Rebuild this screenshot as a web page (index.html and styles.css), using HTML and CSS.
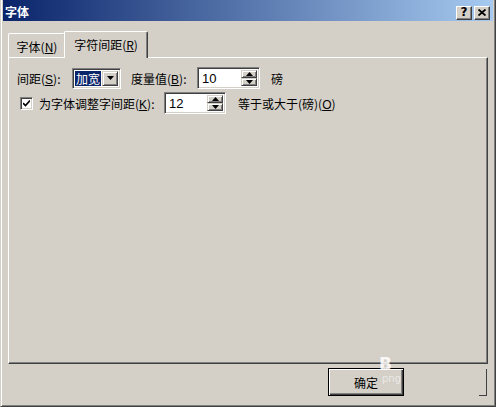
FILE: index.html
```html
<!DOCTYPE html>
<html lang="zh-CN">
<head>
<meta charset="utf-8">
<title>字体</title>
<link rel="stylesheet" href="styles.css">
</head>
<body>
<div class="window">
  <div class="titlebar">
    <span class="title">字体</span>
    <div class="tbtns">
      <span class="tbtn help">?</span>
      <span class="tbtn close"><svg width="8" height="7" viewBox="0 0 8 7"><path d="M0.5 0.5 L7.5 6.5 M7.5 0.5 L0.5 6.5" stroke="#000" stroke-width="1.8" fill="none"/></svg></span>
    </div>
  </div>
  <div class="body">
    <div class="tabs">
      <div class="tab">字体(<u>N</u>)</div>
      <div class="tab active">字符间距(<u>R</u>)</div>
    </div>
    <div class="panel">
      <div class="row r1">
        <span class="lbl l-space">间距(<u>S</u>):</span>
        <div class="combo">
          <span class="cval"><span class="sel">加宽</span></span>
          <span class="cbtn"><svg width="7" height="4" viewBox="0 0 7 4"><path d="M0 0H7L3.5 4Z" fill="#000"/></svg></span>
        </div>
        <span class="lbl l-by">度量值(<u>B</u>):</span>
        <div class="spin s1">
          <span class="sval">10</span>
          <span class="sbtns">
            <span class="sb"><svg width="7" height="4" viewBox="0 0 7 4"><path d="M3.5 0L7 4H0Z" fill="#000"/></svg></span>
            <span class="sb"><svg width="7" height="4" viewBox="0 0 7 4"><path d="M0 0H7L3.5 4Z" fill="#000"/></svg></span>
          </span>
        </div>
        <span class="lbl l-pt">磅</span>
      </div>
      <div class="row r2">
        <span class="chk"><svg width="7" height="7" viewBox="0 0 7 7"><path d="M0 3 L2.5 5.5 L7 0.5" stroke="#000" stroke-width="1.6" fill="none"/></svg></span>
        <span class="lbl l-kern">为字体调整字间距(<u>K</u>):</span>
        <div class="spin s2">
          <span class="sval">12</span>
          <span class="sbtns">
            <span class="sb"><svg width="7" height="4" viewBox="0 0 7 4"><path d="M3.5 0L7 4H0Z" fill="#000"/></svg></span>
            <span class="sb"><svg width="7" height="4" viewBox="0 0 7 4"><path d="M0 0H7L3.5 4Z" fill="#000"/></svg></span>
          </span>
        </div>
        <span class="lbl l-ge">等于或大于(磅)(<u>O</u>)</span>
      </div>
    </div>
    <div class="btnrow">
      <div class="btn ok">确定</div>
      <div class="btn-edge"></div>
    </div>
    <div class="watermark"><span class="wm-b">B</span><span class="wm-p">png</span></div>
  </div>
</div>
</body>
</html>
```
FILE: styles.css
```css
* { box-sizing: border-box; }
html, body { margin: 0; padding: 0; }
body {
  width: 496px;
  height: 407px;
  overflow: hidden;
  background: #d4d0c8;
  font-family: "Liberation Sans", "Noto Sans CJK SC", sans-serif;
  font-size: 12px;
  color: #000;
}
u { text-decoration: underline; text-underline-offset: 1px; }

.window {
  position: relative;
  width: 496px;
  height: 407px;
  background: #d4d0c8;
  border-left: 1px solid #d4d0c8;
  border-right: 1px solid #404040;
  border-bottom: 1px solid #404040;
  box-shadow: inset 1px 0 #fff, inset -1px -1px #808080;
  padding: 0 2px 2px 2px;
  display: flex;
  flex-direction: column;
}

.titlebar {
  height: 21px;
  background: linear-gradient(to right, #0a246a, #a6caf0);
  display: flex;
  align-items: center;
  justify-content: space-between;
  padding: 3px 3px 0 2px;
}
.title {
  color: #fff;
  font-weight: bold;
  font-size: 12px;
  font-family: "Noto Sans CJK SC", sans-serif;
  line-height: 14px;
}
.tbtns { display: flex; gap: 2px; margin-top: 1px; }
.tbtn {
  width: 16px;
  height: 14px;
  background: #d4d0c8;
  border-top: 1px solid #fff;
  border-left: 1px solid #fff;
  border-right: 1px solid #404040;
  border-bottom: 1px solid #404040;
  box-shadow: inset -1px -1px #808080;
  display: flex;
  align-items: center;
  justify-content: center;
  font-weight: bold;
  font-size: 12px;
  line-height: 12px;
  font-family: "DejaVu Sans", sans-serif;
}
.help { padding-bottom: 1px; }

.body {
  flex: 1;
  display: flex;
  flex-direction: column;
  padding: 10px 5px 0 5px;
}

.tabs {
  display: flex;
  align-items: flex-end;
  height: 26px;
}
.tab {
  position: relative;
  height: 24px;
  width: 58px;
  border-top: 1px solid #fff;
  border-left: 1px solid #fff;
  border-right: 1px solid #404040;
  box-shadow: inset -1px 0 #808080;
  border-radius: 2px 2px 0 0;
  display: flex;
  align-items: center;
  justify-content: center;
  padding-top: 2px;
  font-family: "Noto Sans CJK SC", sans-serif;
}
.tab.active {
  width: 84px;
  height: 27px;
  margin-left: -2px;
  margin-bottom: -1px;
  background: #d4d0c8;
  z-index: 2;
  padding-top: 0;
  padding-bottom: 2px;
}

.panel {
  height: 307px;
  border-top: 1px solid #fff;
  border-left: 1px solid #fff;
  border-right: 1px solid #404040;
  border-bottom: 1px solid #404040;
  box-shadow: inset -1px -1px #808080;
  padding: 9px 0 0 8px;
  display: flex;
  flex-direction: column;
  gap: 3px;
}
.row {
  display: flex;
  align-items: center;
  height: 22px;
}
.lbl { white-space: nowrap; font-family: "Noto Sans CJK SC", sans-serif; flex-shrink: 0; }
.lbl u { font-family: "Liberation Sans", sans-serif; }

.l-space { width: 55px; }
.combo {
  width: 49px;
  height: 21px;
  flex-shrink: 0;
  background: #fff;
  border-top: 1px solid #808080;
  border-left: 1px solid #808080;
  border-right: 1px solid #fff;
  border-bottom: 1px solid #fff;
  box-shadow: inset 1px 1px #404040, inset -1px -1px #d4d0c8;
  display: flex;
  padding: 2px;
}
.cval { flex: 1; display: flex; align-items: center; min-width: 0; }
.sel {
  background: #0a246a;
  color: #fff;
  font-family: "Noto Sans CJK SC", sans-serif;
  line-height: 15px;
  white-space: nowrap;
  flex-shrink: 0;
  padding: 0 1px;
}
.cbtn, .sb {
  background: #d4d0c8;
  border-top: 1px solid #d4d0c8;
  border-left: 1px solid #d4d0c8;
  border-right: 1px solid #404040;
  border-bottom: 1px solid #404040;
  box-shadow: inset 1px 1px #fff, inset -1px -1px #808080;
  display: flex;
  align-items: center;
  justify-content: center;
}
.cbtn { width: 16px; flex-shrink: 0; }
.l-by { margin-left: 10px; width: 66px; }

.spin {
  height: 22px;
  flex-shrink: 0;
  background: #fff;
  border-top: 1px solid #808080;
  border-left: 1px solid #808080;
  border-right: 1px solid #fff;
  border-bottom: 1px solid #fff;
  box-shadow: inset 1px 1px #404040, inset -1px -1px #d4d0c8;
  display: flex;
  padding: 2px;
}
.s1 { width: 63px; }
.s2 { width: 62px; }
.sval {
  flex: 1;
  padding-left: 2px;
  display: flex;
  align-items: center;
  font-size: 13px;
}
.sbtns { width: 16px; display: flex; flex-direction: column; }
.sb { flex: 1; }
.sb svg { width: 7px; height: 4px; }
.l-pt { margin-left: 11px; }

.chk {
  width: 13px;
  height: 13px;
  margin-left: 3px;
  flex-shrink: 0;
  background: #fff;
  border-top: 1px solid #808080;
  border-left: 1px solid #808080;
  border-right: 1px solid #fff;
  border-bottom: 1px solid #fff;
  box-shadow: inset 1px 1px #404040, inset -1px -1px #d4d0c8;
  display: flex;
  align-items: center;
  justify-content: center;
}
.l-kern { margin-left: 6px; width: 125px; }
.l-ge { margin-left: 12px; }

.btnrow {
  display: flex;
  justify-content: flex-end;
  align-items: flex-start;
  padding-top: 4px;
  padding-right: 1px;
}
.btn {
  width: 76px;
  height: 28px;
  background: #d4d0c8;
  border: 1px solid #000;
  box-shadow: inset 1px 1px #fff, inset -1px -1px #404040, inset -2px -2px #808080;
  display: flex;
  align-items: center;
  justify-content: center;
  font-family: "Noto Sans CJK SC", sans-serif;
}
.btn-edge {
  width: 8px;
  height: 27px;
  margin-left: 75px;
  margin-top: 1px;
  border-right: 1px solid #404040;
  border-bottom: 1px solid #404040;
}

.watermark {
  position: absolute;
  left: 378px;
  top: 356px;
  display: flex;
  flex-direction: column;
  color: rgba(255,255,255,0.85);
  pointer-events: none;
}
.wm-b { font-family: "DejaVu Sans", sans-serif; font-size: 17px; font-weight: bold; line-height: 17px; }
.wm-p { font-family: "DejaVu Sans", sans-serif; font-size: 10px; line-height: 11px; margin-left: 3px; color: rgba(255,255,255,0.55); }
```
